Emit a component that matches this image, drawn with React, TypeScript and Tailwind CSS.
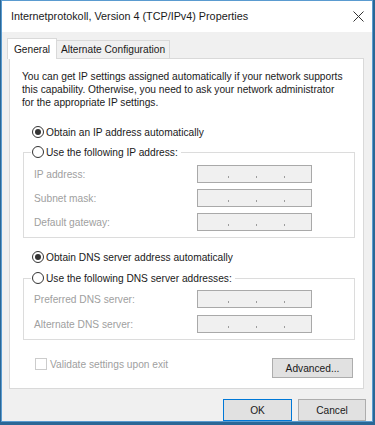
import React from 'react';

const Radio = ({ checked }: { checked?: boolean }) => (
  <span className="inline-flex w-[12px] h-[12px] rounded-full border border-[#333333] bg-white items-center justify-center shrink-0">
    {checked && <span className="w-[6px] h-[6px] rounded-full bg-[#333333]" />}
  </span>
);

// disabled ip address box with the three separators
const IpBox = () => (
  <div className="w-[115px] h-[18px] border border-[#a9a9a9] bg-[#f0f0f0] flex items-start pt-[10px] pl-[30px] gap-[27px]">
    <span className="w-[1px] h-[2px] bg-[#9c9c9c]" />
    <span className="w-[1px] h-[2px] bg-[#9c9c9c]" />
    <span className="w-[1px] h-[2px] bg-[#9c9c9c]" />
  </div>
);

const Field = ({ label }: { label: string }) => (
  <div className="flex items-center h-[18px]">
    <span className="w-[163px] text-[#a0a0a0]">{label}</span>
    <IpBox />
  </div>
);

const Btn = ({ children, className = '' }: { children: React.ReactNode; className?: string }) => (
  <button className={`flex items-center justify-center bg-[#e1e1e1] border border-[#adadad] text-[#1a1a1a] ${className}`}>
    {children}
  </button>
);

export default function App() {
  return (
    <div className="w-[375px] h-[425px] bg-[#2a6796] font-['Liberation_Sans',Arial,sans-serif] text-[10.2px] text-[#1a1a1a] leading-[13px]">
      <div className="ml-[1px] w-[372px] h-[422px] border border-[#5a9bd0] bg-[#f0f0f0] flex flex-col">
        {/* Title bar */}
        <div className="h-[31px] bg-white flex items-center justify-between pl-[9px] pr-[8px]">
          <span className="text-[10.8px] text-[#1a1a1a]">Internetprotokoll, Version 4 (TCP/IPv4) Properties</span>
          <svg width="11" height="11" viewBox="0 0 11 11">
            <path d="M0.5 0.5L10.5 10.5M10.5 0.5L0.5 10.5" stroke="#333" strokeWidth="1" />
          </svg>
        </div>

        {/* Tabs */}
        <div className="flex items-end ml-[5px] mt-[6px]">
          <div className="w-[50px] h-[21px] -mb-[1px] relative z-10 bg-white border border-b-0 border-[#d9d9d9] flex items-center justify-center">
            General
          </div>
          <div className="w-[113px] h-[18px] border border-l-0 border-b-0 border-[#d9d9d9] flex items-center justify-center">
            Alternate Configuration
          </div>
        </div>

        {/* Tab panel */}
        <div className="ml-[7px] w-[355px] h-[331px] bg-white border border-[#d9d9d9] flex flex-col pl-[12px]">
          <p className="mt-[11px] whitespace-nowrap">
            You can get IP settings assigned automatically if your network supports
            <br />
            this capability. Otherwise, you need to ask your network administrator
            <br />
            for the appropriate IP settings.
          </p>

          <div className="mt-[16px] ml-[10px] h-[14px] flex items-center gap-[2px]">
            <Radio checked />
            <span>Obtain an IP address automatically</span>
          </div>

          <fieldset className="mt-[6px] ml-[1px] mr-[8px] border border-[#dcdcdc] pl-[10px] pb-[6px]">
            <legend className="-ml-[3px] pl-[1px] pr-[3px]">
              <span className="h-[14px] flex items-center gap-[2px]">
                <Radio />
                <span>Use the following IP address:</span>
              </span>
            </legend>
            <div className="mt-[6px] flex flex-col gap-[6px]">
              <Field label="IP address:" />
              <Field label="Subnet mask:" />
              <Field label="Default gateway:" />
            </div>
          </fieldset>

          <div className="mt-[12px] ml-[10px] h-[14px] flex items-center gap-[2px]">
            <Radio checked />
            <span>Obtain DNS server address automatically</span>
          </div>

          <fieldset className="mt-[7px] ml-[1px] mr-[8px] border border-[#dcdcdc] pl-[10px] pb-[6px]">
            <legend className="-ml-[3px] pl-[1px] pr-[3px]">
              <span className="h-[14px] flex items-center gap-[2px]">
                <Radio />
                <span>Use the following DNS server addresses:</span>
              </span>
            </legend>
            <div className="mt-[5px] flex flex-col gap-[7px]">
              <Field label="Preferred DNS server:" />
              <Field label="Alternate DNS server:" />
            </div>
          </fieldset>

          <div className="mt-[18px] mr-[10px] flex items-start justify-between">
            <div className="ml-[13px] h-[12px] flex items-center gap-[3px] text-[#a0a0a0]">
              <span className="w-[12px] h-[12px] border border-[#cccccc] bg-white" />
              <span>Validate settings upon exit</span>
            </div>
            <Btn className="w-[81px] h-[20px]">Advanced...</Btn>
          </div>
        </div>

        {/* Footer buttons */}
        <div className="mt-[10px] flex justify-end gap-[6px] pr-[6px]">
          <Btn className="w-[69px] h-[22px] !border-[#0078d7]">OK</Btn>
          <Btn className="w-[68px] h-[22px]">Cancel</Btn>
        </div>
      </div>
    </div>
  );
}
